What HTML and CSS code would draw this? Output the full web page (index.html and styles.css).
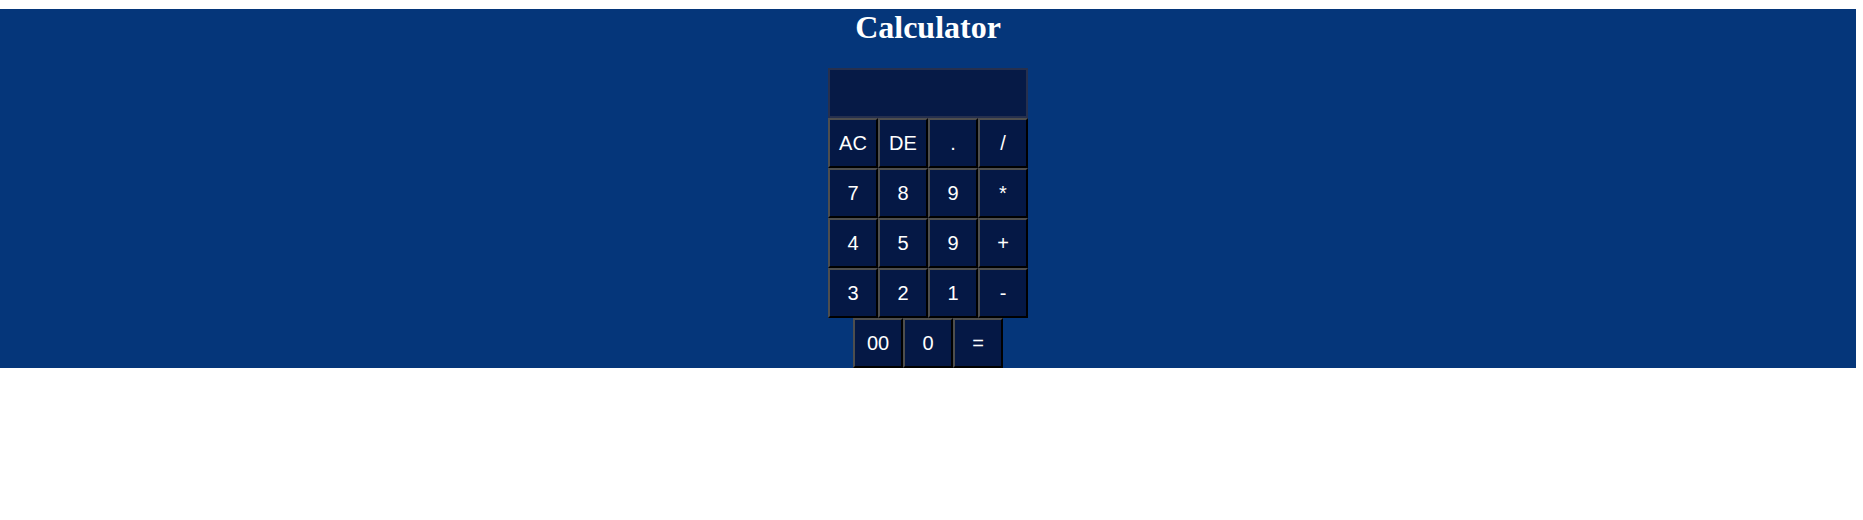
FILE: index.html
```html
<!DOCTYPE html>
<html>
<head>
<meta charset="utf-8">
<title>Calculator</title>
<link rel="stylesheet" href="styles.css">
</head>
<body>
<div class="app">
  <h1 class="title">Calculator</h1>
  <div class="calc">
    <div class="display"></div>
    <div class="keys">
      <button class="key">AC</button>
      <button class="key">DE</button>
      <button class="key">.</button>
      <button class="key">/</button>
      <button class="key">7</button>
      <button class="key">8</button>
      <button class="key">9</button>
      <button class="key">*</button>
      <button class="key">4</button>
      <button class="key">5</button>
      <button class="key">9</button>
      <button class="key">+</button>
      <button class="key">3</button>
      <button class="key">2</button>
      <button class="key">1</button>
      <button class="key">-</button>
    </div>
    <div class="last-row">
      <button class="key">00</button>
      <button class="key">0</button>
      <button class="key">=</button>
    </div>
  </div>
</div>
</body>
</html>
```

FILE: styles.css
```css
html, body {
  margin: 0;
  padding: 0;
  background: #ffffff;
}

.app {
  margin-top: 9px;
  width: calc(100% - 7px);
  background: #05367a;
  display: flex;
  flex-direction: column;
  align-items: center;
}

.title {
  margin: 0 0 22px;
  font-family: "Liberation Serif", "Times New Roman", serif;
  font-weight: bold;
  font-size: 32px;
  line-height: 37px;
  color: #ffffff;
}

.calc {
  width: 200px;
  display: flex;
  flex-direction: column;
  align-items: center;
}

.display {
  box-sizing: border-box;
  width: 200px;
  height: 50px;
  background: #061a46;
  border: 2px solid #26304e;
}

.keys {
  display: grid;
  grid-template-columns: repeat(4, 50px);
  grid-auto-rows: 50px;
}

.last-row {
  display: flex;
}

.key {
  box-sizing: border-box;
  width: 50px;
  height: 50px;
  margin: 0;
  padding: 0;
  background: #051845;
  color: #ffffff;
  font-family: "Liberation Sans", Arial, sans-serif;
  font-size: 20px;
  border-style: solid;
  border-width: 2px;
  border-color: #4e4e4e #000000 #000000 #4e4e4e;
}
```
